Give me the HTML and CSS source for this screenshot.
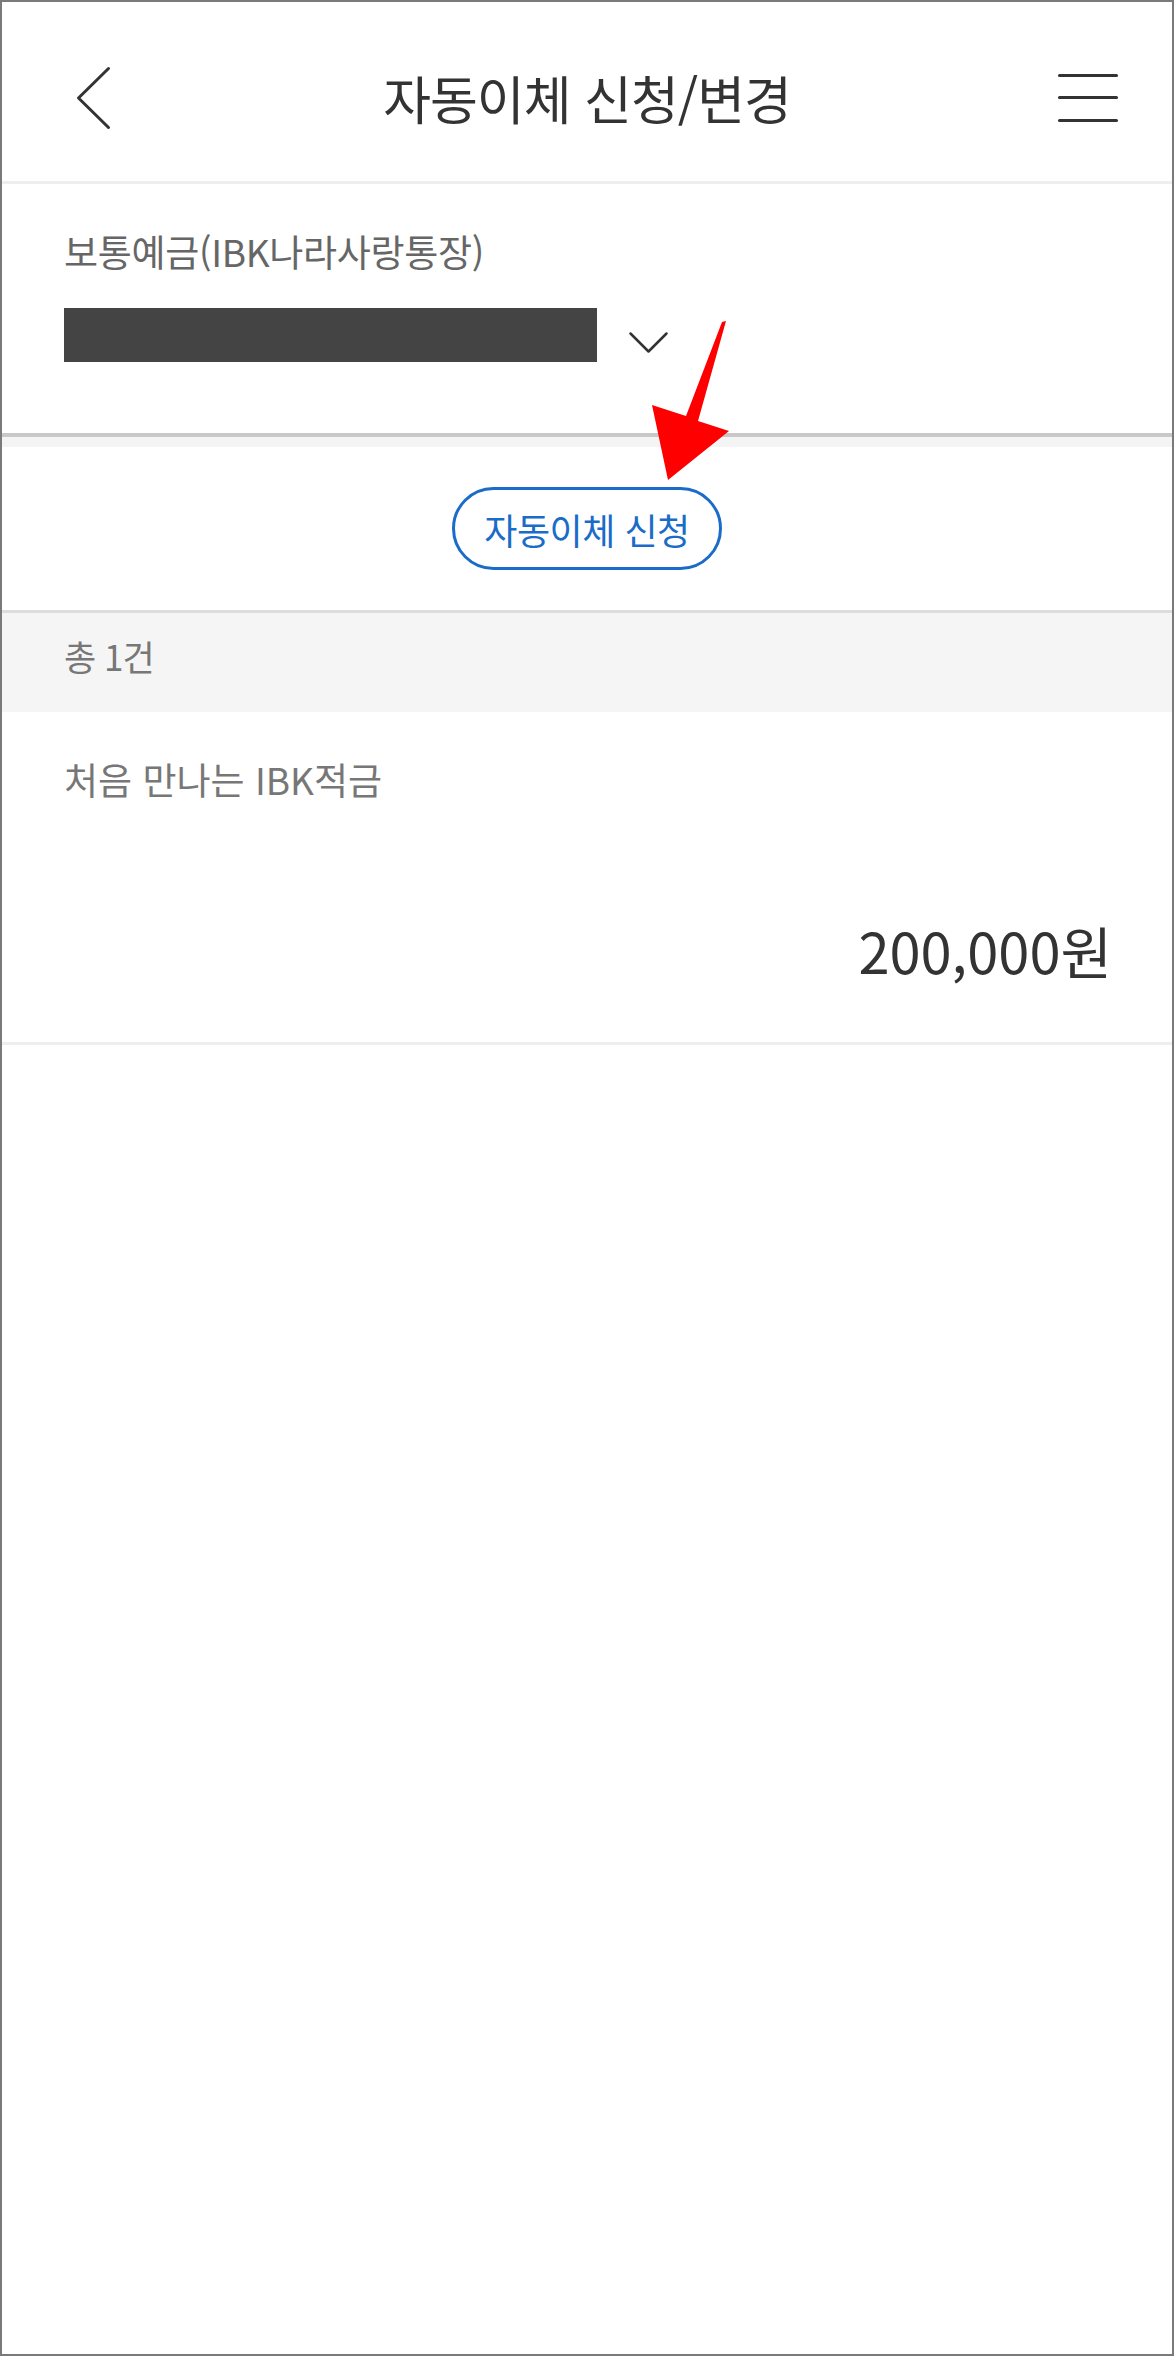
FILE: index.html
```html
<!DOCTYPE html>
<html lang="ko">
<head>
  <meta charset="UTF-8">
  <meta name="viewport" content="width=device-width, initial-scale=1.0">
  <title>자동이체 신청/변경</title>
  <link rel="stylesheet" href="styles.css">
</head>
<body>
  <div class="screen">
    <!-- Top bar -->
    <header class="top-bar">
      <div class="back-btn">
        <svg width="36" height="66" viewBox="0 0 36 66" xmlns="http://www.w3.org/2000/svg">
          <polyline points="32.5,3.5 2.5,33 32.5,62.5" />
        </svg>
      </div>
      <h1 class="page-title">자동이체 신청/변경</h1>
      <div class="menu-btn">
        <span></span>
        <span></span>
        <span></span>
      </div>
    </header>

    <!-- Account selector -->
    <section class="account">
      <div class="account-name">보통예금(IBK나라사랑통장)</div>
      <div class="account-row">
        <div class="account-number"></div>
        <svg class="account-toggle" width="42" height="24" viewBox="0 0 42 24" xmlns="http://www.w3.org/2000/svg">
          <polyline points="2.5,2.5 20.5,20.5 38.5,2.5" />
        </svg>
      </div>
    </section>
    <div class="spacer"></div>

    <!-- Apply button -->
    <section class="apply">
      <button class="apply-btn" type="button">자동이체 신청</button>
    </section>

    <!-- List -->
    <div class="list-count">총 1건</div>
    <ul class="transfer-list">
      <li class="transfer-item">
        <div class="transfer-name">처음 만나는 IBK적금</div>
        <div class="transfer-amount">200,000원</div>
      </li>
    </ul>

    <!-- Annotation arrow -->
    <svg class="pointer-arrow" width="100" height="180" viewBox="0 0 100 180" xmlns="http://www.w3.org/2000/svg">
      <polygon points="82,12 86,11 58,111 89,121 28,170 12,95 46,106" />
    </svg>
  </div>
</body>
</html>
```

FILE: styles.css
```css
/* Base */
:root {
  --text: #333333;
  --text-sub: #666666;
  --text-light: #777777;
  --blue: #1a6cc8;
  --line: #eeeeee;
}
* {
  margin: 0;
  padding: 0;
  box-sizing: border-box;
}
body {
  font-family: "Noto Sans CJK KR", "Noto Sans", sans-serif;
  color: var(--text);
  background: #ffffff;
}
.screen {
  position: relative;
  width: 1174px;
  height: 2356px;
  border: 2px solid #7a7a7a;
  background: #ffffff;
  overflow: hidden;
}

/* Top bar */
.top-bar {
  display: grid;
  grid-template-columns: 1fr auto 1fr;
  align-items: center;
  height: 182px;
  padding: 12px 54px 0;
  border-bottom: 3px solid var(--line);
}
.back-btn {
  margin-left: 20px;
}
.back-btn svg {
  display: block;
  fill: none;
  stroke: #333333;
  stroke-width: 3;
  stroke-linecap: round;
  stroke-linejoin: round;
}
.page-title {
  font-size: 52px;
  font-weight: 400;
  line-height: 64px;
  letter-spacing: -1px;
  color: #333333;
}
.menu-btn {
  justify-self: end;
  display: flex;
  flex-direction: column;
  gap: 19.5px;
  width: 60px;
}
.menu-btn span {
  display: block;
  height: 3px;
  background: #333333;
  border-radius: 2px;
}

/* Account selector */
.account {
  padding: 44px 62px 71px;
  border-bottom: 4px solid #c8c8c8;
}
.account-name {
  font-size: 37px;
  line-height: 47px;
  letter-spacing: -0.3px;
  color: var(--text-sub);
}
.account-row {
  display: flex;
  align-items: flex-start;
  margin-top: 33px;
}
.account-number {
  width: 533px;
  height: 54px;
  background: #444444;
}
.account-toggle {
  margin: 23px 0 0 31px;
  fill: none;
  stroke: #333333;
  stroke-width: 2.5;
  stroke-linecap: round;
  stroke-linejoin: round;
}
.spacer {
  height: 10px;
  background: #f4f4f4;
}

/* Apply button */
.apply {
  display: flex;
  justify-content: center;
  padding: 40px 0;
  border-bottom: 3px solid #dddddd;
}
.apply-btn {
  display: inline-flex;
  align-items: center;
  justify-content: center;
  height: 83px;
  padding: 0 29px;
  border: 3px solid var(--blue);
  border-radius: 42px;
  background: #ffffff;
  font-family: inherit;
  font-size: 36px;
  letter-spacing: -0.5px;
  color: var(--blue);
  cursor: pointer;
}

/* List */
.list-count {
  height: 99px;
  padding: 19px 62px 0;
  background: #f5f5f5;
  font-size: 35px;
  line-height: 48px;
  letter-spacing: -1px;
  color: var(--text-light);
}
.transfer-list {
  list-style: none;
}
.transfer-item {
  padding: 42px 60px 56px 62px;
  border-bottom: 3px solid var(--line);
}
.transfer-name {
  font-size: 37px;
  line-height: 50px;
  color: var(--text-light);
}
.transfer-amount {
  margin-top: 110px;
  text-align: right;
  font-size: 56px;
  line-height: 72px;
  color: #333333;
}

/* Annotation arrow over the content */
.pointer-arrow {
  position: absolute;
  left: 638px;
  top: 308px;
  fill: #ff0000;
}
```
